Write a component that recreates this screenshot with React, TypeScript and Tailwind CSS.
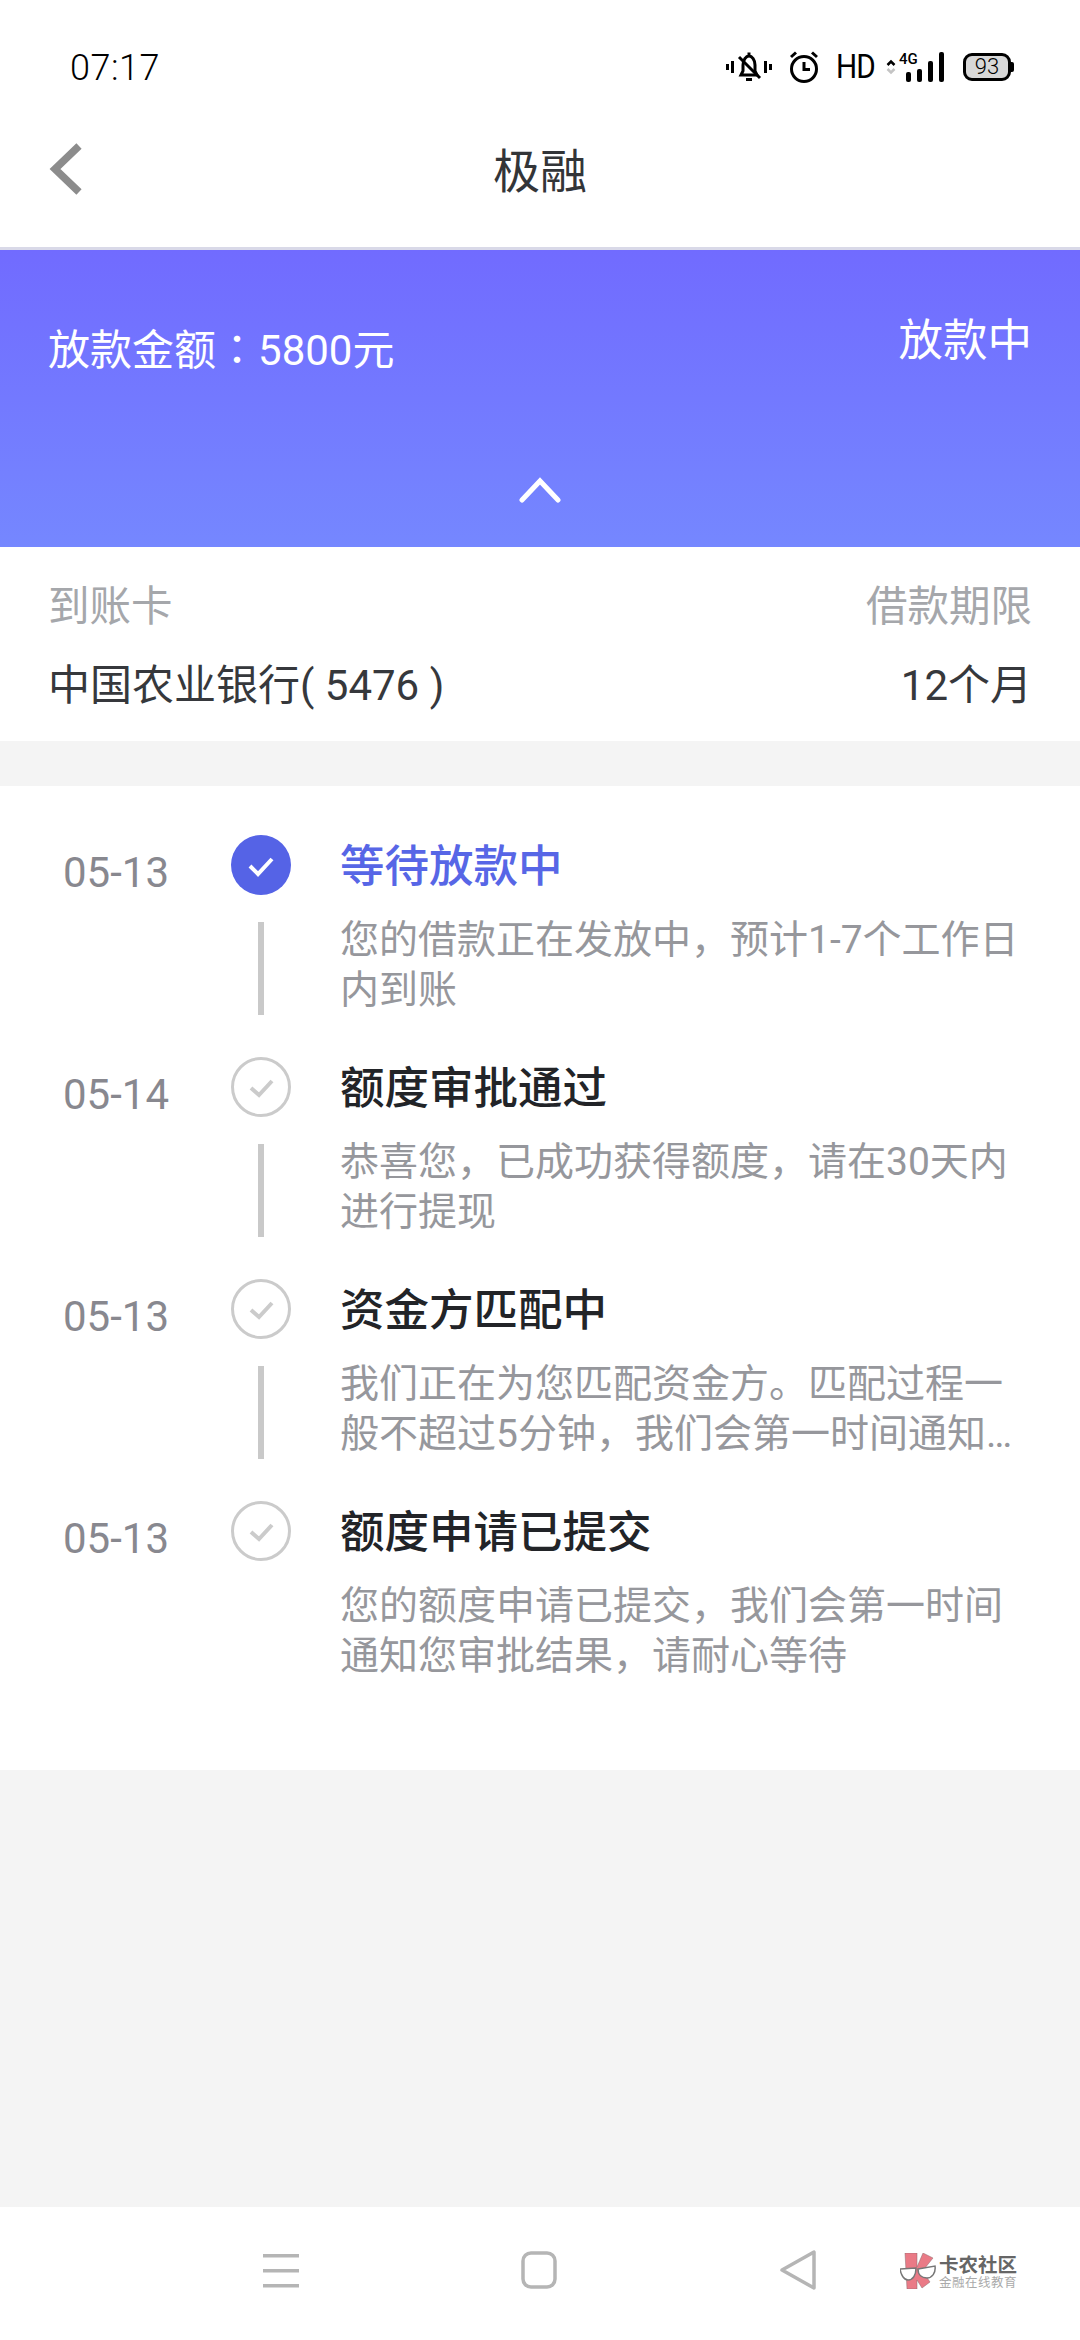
const CJK = "font-['Roboto','Noto_Sans_CJK_SC',sans-serif]";

interface Step {
  date: string;
  title: string;
  lines: string[];
  active?: boolean;
  last?: boolean;
}

const steps: Step[] = [
  { date: "05-13", title: "等待放款中", lines: ["您的借款正在发放中，预计1-7个工作日", "内到账"], active: true },
  { date: "05-14", title: "额度审批通过", lines: ["恭喜您，已成功获得额度，请在30天内", "进行提现"] },
  { date: "05-13", title: "资金方匹配中", lines: ["我们正在为您匹配资金方。匹配过程一", "般不超过5分钟，我们会第一时间通知…"] },
  { date: "05-13", title: "额度申请已提交", lines: ["您的额度申请已提交，我们会第一时间", "通知您审批结果，请耐心等待"], last: true },
];

function StatusIcons() {
  return (
    <div className="flex items-center text-black">
      <svg width="46" height="32" viewBox="0 0 46 32" fill="none" stroke="#000" strokeWidth="3">
        <path d="M1.500 13v6M6.500 10v12M39.500 10v12M44.500 13v6" />
        <path d="M23 1.500v3M15 24l2-4v-6c0-5 3-9 6-9s6 4 6 9v6l2 4z" />
        <path d="M13 6l21 21" />
        <path d="M20 28.500h6" strokeWidth="3" />
      </svg>
      <svg className="ml-[17px]" width="30" height="32" viewBox="0 0 30 32" fill="none" stroke="#000" strokeWidth="3">
        <circle cx="15" cy="18" r="12.500" />
        <path d="M15 11v7.500h6M2 6l5-4.500M28 6l-5-4.500" />
      </svg>
      <span className="ml-[17px] w-[36px] origin-left [transform:scaleX(0.9)] font-['Roboto',sans-serif] text-[33px] leading-none tracking-[-1px]">HD</span>
      <svg className="ml-[14px]" width="10" height="16" viewBox="0 0 10 16" fill="none" strokeWidth="2.500">
        <path d="M1.500 6L5 2.500 8.500 6" stroke="#000" />
        <path d="M1.500 10L5 13.500 8.500 10" stroke="#c4c4c4" />
      </svg>
      <div className="relative ml-[2px] h-[30px] w-[46px]">
        <svg className="absolute top-0 right-0" width="38" height="30" viewBox="0 0 38 30" fill="#000">
          <rect x="0" y="20" width="5" height="10" rx="2" />
          <rect x="11" y="17" width="5" height="13" rx="2" />
          <rect x="22" y="9" width="5" height="21" rx="2" />
          <rect x="33" y="0" width="5" height="30" rx="2" />
        </svg>
        <span className="absolute top-[-1px] left-[1px] font-['Roboto',sans-serif] text-[15px] leading-[16px] font-medium">4G</span>
      </div>
      <div className="ml-[19px] flex items-center">
        <div className="flex h-[28px] w-[48px] items-center justify-center rounded-[9px] border-[3px] border-black bg-[#d8d8d8] font-['Roboto',sans-serif] text-[22px] leading-none font-light">
          93
        </div>
        <div className="h-[10px] w-[3px] rounded-r-[2px] bg-black" />
      </div>
    </div>
  );
}

function TimelineRow({ date, title, lines, active, last }: Step) {
  return (
    <div className={`flex ${last ? "h-[269px]" : "h-[222px]"}`}>
      <div className="w-[168px] pt-[14px] font-['Roboto',sans-serif] text-[42px] leading-[47px] text-[#88888f]">{date}</div>
      <div className="flex w-[60px] flex-col items-center">
        {active ? (
          <svg width="60" height="60" viewBox="0 0 60 60" fill="none">
            <circle cx="30" cy="30" r="30" fill="#5563e6" />
            <path d="M19 31l8 8 14-15" stroke="#fff" strokeWidth="4" />
          </svg>
        ) : (
          <svg width="60" height="60" viewBox="0 0 60 60" fill="none">
            <circle cx="30" cy="30" r="28.500" stroke="#cbcbcb" strokeWidth="3" />
            <path d="M20 31l8 7 13-14" stroke="#cbcbcb" strokeWidth="4" />
          </svg>
        )}
        {!last && <div className="mt-[27px] h-[93px] w-[6px] bg-[#c9c9c9]" />}
      </div>
      <div className="ml-[49px] flex-1 pt-[3px]">
        <div className={`text-[44.500px] leading-[58px] font-medium ${active ? "text-[#5766e6]" : "text-[#222428]"}`}>{title}</div>
        <div className="mt-[19px] text-[39px] leading-[50px] whitespace-nowrap text-[#96979c]">
          {lines.map((line) => (
            <div key={line}>{line}</div>
          ))}
        </div>
      </div>
    </div>
  );
}

export default function App() {
  return (
    <div className={`flex h-[2340px] w-[1080px] flex-col overflow-hidden bg-[#f4f4f4] ${CJK}`}>
      <div className="bg-white">
        <div className="flex h-[110px] items-start justify-between pt-[48px] pr-[66px] pl-[70px]">
          <span className="font-['Roboto',sans-serif] text-[36px] leading-[40px] font-light tracking-[0.5px] text-black">07:17</span>
          <div className="pt-[2px]">
            <StatusIcons />
          </div>
        </div>
        <div className="relative flex h-[140px] items-start justify-center border-b-[3px] border-[#d9d9e8] pt-[32px]">
          <svg className="absolute top-[33px] left-[48px]" width="36" height="52" viewBox="0 0 36 52" fill="none">
            <path d="M31 3L7 26l24 23" stroke="#8c8c8c" strokeWidth="7.500" />
          </svg>
          <span className="text-[47px] leading-[60px] text-[#333538]">极融</span>
        </div>
      </div>

      <div className="flex h-[297px] flex-col bg-[linear-gradient(180deg,#716bff,#7587ff)] pr-[48px] pl-[48px] text-white">
        <div className="flex h-[132px] items-start justify-between">
          <span className="pt-[69px] text-[42px] leading-[56px]">
            放款金额<span className="font-['Noto_Sans_CJK_TC',sans-serif]">：</span>5800元
          </span>
          <span className="pt-[61px] text-[44.500px] leading-[60px]">放款中</span>
        </div>
        <svg className="mt-[95px] self-center" width="42" height="26" viewBox="0 0 42 26" fill="none">
          <path d="M3 23L21 4l18 19" stroke="#fff" strokeWidth="5" strokeLinecap="round" />
        </svg>
      </div>

      <div className="flex h-[194px] justify-between bg-white pt-[33px] pr-[48px] pl-[48px]">
        <div>
          <div className="text-[41.500px] leading-[54px] text-[#a5a7ab]">到账卡</div>
          <div className="mt-[25px] text-[42px] leading-[54px] text-[#36383c]">中国农业银行( 5476 )</div>
        </div>
        <div className="text-right">
          <div className="text-[41.500px] leading-[54px] text-[#a5a7ab]">借款期限</div>
          <div className="mt-[25px] text-[42px] leading-[54px] text-[#36383c]">12个月</div>
        </div>
      </div>

      <div className="mt-[45px] bg-white pt-[49px] pl-[63px]">
        {steps.map((step) => (
          <TimelineRow key={step.title} {...step} />
        ))}
      </div>

      <div className="flex-1" />

      <div className="relative flex h-[133px] items-center justify-center gap-[222px] bg-white pb-[8px]">
        <svg width="36" height="36" viewBox="0 0 36 36" fill="#b5b5b5">
          <rect y="2" width="36" height="3.500" />
          <rect y="17" width="36" height="3.500" />
          <rect y="32" width="36" height="3.500" />
        </svg>
        <svg width="36" height="38" viewBox="0 0 36 38" fill="none">
          <rect x="2" y="2" width="32" height="34" rx="8" stroke="#b5b5b5" strokeWidth="3.500" />
        </svg>
        <svg width="38" height="42" viewBox="0 0 38 42" fill="none">
          <path d="M35 3v36L3 21z" stroke="#b5b5b5" strokeWidth="3.500" strokeLinejoin="round" />
        </svg>
        {/* watermark over the nav bar */}
        <div className="absolute top-[46px] left-[900px] flex items-center">
          <svg width="36" height="36" viewBox="0 0 36 36">
            <path d="M5 0h12v14l6-14 10 5-8 10-2 4 7 10-8 6-5-8v9H7z" fill="#ea7a86" stroke="#8a6a6e" strokeWidth="0.500" />
            <path d="M0 16l16-1c0 7-3 12-8 12-4 0-7-5-8-11zM18 16l17-3c1 7-3 12-8 12s-9-3-9-9z" fill="#fff" stroke="#777" strokeWidth="1.500" />
          </svg>
          <div className="ml-[3px] w-[80px] font-['Noto_Sans_CJK_SC',sans-serif]">
            <div className="text-[19.500px] leading-[21px] font-bold whitespace-nowrap text-[#666]">卡农社区</div>
            <div className="mt-[1px] text-[12.500px] leading-[14px] tracking-[0.5px] whitespace-nowrap text-[#aaa]">金融在线教育</div>
          </div>
        </div>
      </div>
    </div>
  );
}
